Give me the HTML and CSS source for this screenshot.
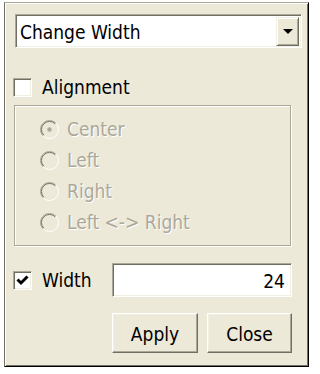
FILE: index.html
```html
<!DOCTYPE html>
<html>
<head>
<meta charset="utf-8">
<link rel="stylesheet" href="styles.css">
</head>
<body>
<div class="panel">
  <div class="combo">
    <span class="combo-text">Change Width</span>
    <span class="combo-btn">
      <svg width="10" height="5" viewBox="0 0 10 5"><path d="M0 0H10L5 5Z" fill="#000"/></svg>
    </span>
  </div>

  <div class="row check-row">
    <span class="checkbox"></span>
    <span class="label">Alignment</span>
  </div>

  <div class="group">
    <div class="radio-row">
      <svg class="radio" width="19" height="19" viewBox="0 0 19 19">
        <circle cx="9.5" cy="9.5" r="8" fill="#ece9d8"/>
        <path d="M3.1 15.9A9 9 0 0 1 15.9 3.1" fill="none" stroke="#aca899"/>
        <path d="M3.8 15.2A8 8 0 0 1 15.2 3.8" fill="none" stroke="#716f64"/>
        <path d="M15.9 3.1A9 9 0 0 1 3.1 15.9" fill="none" stroke="#fff"/>
        <circle cx="9.5" cy="9.5" r="2.2" fill="#aca899"/>
      </svg>
      <span class="label disabled">Center</span>
    </div>
    <div class="radio-row">
      <svg class="radio" width="19" height="19" viewBox="0 0 19 19">
        <circle cx="9.5" cy="9.5" r="8" fill="#ece9d8"/>
        <path d="M3.1 15.9A9 9 0 0 1 15.9 3.1" fill="none" stroke="#aca899"/>
        <path d="M3.8 15.2A8 8 0 0 1 15.2 3.8" fill="none" stroke="#716f64"/>
        <path d="M15.9 3.1A9 9 0 0 1 3.1 15.9" fill="none" stroke="#fff"/>
      </svg>
      <span class="label disabled">Left</span>
    </div>
    <div class="radio-row">
      <svg class="radio" width="19" height="19" viewBox="0 0 19 19">
        <circle cx="9.5" cy="9.5" r="8" fill="#ece9d8"/>
        <path d="M3.1 15.9A9 9 0 0 1 15.9 3.1" fill="none" stroke="#aca899"/>
        <path d="M3.8 15.2A8 8 0 0 1 15.2 3.8" fill="none" stroke="#716f64"/>
        <path d="M15.9 3.1A9 9 0 0 1 3.1 15.9" fill="none" stroke="#fff"/>
      </svg>
      <span class="label disabled">Right</span>
    </div>
    <div class="radio-row">
      <svg class="radio" width="19" height="19" viewBox="0 0 19 19">
        <circle cx="9.5" cy="9.5" r="8" fill="#ece9d8"/>
        <path d="M3.1 15.9A9 9 0 0 1 15.9 3.1" fill="none" stroke="#aca899"/>
        <path d="M3.8 15.2A8 8 0 0 1 15.2 3.8" fill="none" stroke="#716f64"/>
        <path d="M15.9 3.1A9 9 0 0 1 3.1 15.9" fill="none" stroke="#fff"/>
      </svg>
      <span class="label disabled">Left &lt;-&gt; Right</span>
    </div>
  </div>

  <div class="row width-row">
    <span class="checkbox">
      <svg width="15" height="15" viewBox="0 0 15 15"><path d="M2.5 6.5L6 10L12.5 3.5" fill="none" stroke="#000" stroke-width="3"/></svg>
    </span>
    <span class="label width-label">Width</span>
    <div class="field">24</div>
  </div>

  <div class="buttons">
    <div class="button apply">Apply</div>
    <div class="button close">Close</div>
  </div>
</div>
</body>
</html>
```

FILE: styles.css
```css
html, body {
  margin: 0;
  padding: 0;
  background: #ffffff;
}

body {
  font-family: "DejaVu Sans Condensed", "Liberation Sans", sans-serif;
  font-size: 19px;
  color: #000;
}

.panel {
  box-sizing: border-box;
  margin: 2px 0 0 4px;
  width: 305px;
  height: 365px;
  background: #ece9d8;
  border-top: 1px solid #aca899;
  border-left: 1px solid #716f64;
  border-right: 1px solid #000;
  border-bottom: 1px solid #000;
  box-shadow: inset 1px 1px 0 #fff, inset -1px -1px 0 #716f64;
  padding: 11px 0 0 8px;
}

.combo {
  box-sizing: border-box;
  margin-left: 2px;
  width: 287px;
  height: 34px;
  background: #fff;
  border-top: 1px solid #aca899;
  border-left: 1px solid #aca899;
  border-right: 1px solid #fff;
  border-bottom: 1px solid #fff;
  box-shadow: inset 1px 1px 0 #716f64, inset -1px -1px 0 #f1efe2;
  display: flex;
  align-items: center;
  padding: 0 2px 0 4px;
}

.combo-text {
  flex: 1;
  line-height: 1;
  padding-top: 2px;
}

.combo-btn {
  box-sizing: border-box;
  width: 23px;
  height: 29px;
  background: #ece9d8;
  border-top: 1px solid #f1efe2;
  border-left: 1px solid #f1efe2;
  border-right: 1px solid #716f64;
  border-bottom: 1px solid #716f64;
  box-shadow: inset 1px 1px 0 #fff, inset -1px -1px 0 #aca899;
  display: flex;
  align-items: center;
  justify-content: center;
}

.combo-btn svg {
  display: block;
  margin-left: 1px;
}

.row {
  display: flex;
  align-items: center;
}

.check-row {
  margin-top: 30px;
  height: 19px;
}

.checkbox {
  box-sizing: border-box;
  width: 19px;
  height: 19px;
  flex: none;
  background: #fff;
  border-top: 1px solid #aca899;
  border-left: 1px solid #aca899;
  border-right: 1px solid #fff;
  border-bottom: 1px solid #fff;
  box-shadow: inset 1px 1px 0 #716f64, inset -1px -1px 0 #f1efe2;
  display: flex;
  align-items: center;
  justify-content: center;
}

.checkbox svg {
  display: block;
}

.label {
  margin-left: 10px;
  line-height: 1;
  white-space: nowrap;
}

.disabled {
  color: #aca899;
  text-shadow: 1px 1px 0 #fff;
  margin-left: 8px;
}

.group {
  box-sizing: border-box;
  margin: 8px 0 0 1px;
  width: 277px;
  height: 141px;
  border: 1px solid #aca899;
  box-shadow: 1px 1px 0 #fff, inset 1px 1px 0 #fff;
  padding: 8px 0 0 25px;
}

.radio-row {
  display: flex;
  align-items: center;
  height: 31px;
}

.radio {
  display: block;
  flex: none;
}

.width-row {
  margin-top: 17px;
  height: 34px;
}

.width-label {
  width: 70px;
  margin-left: 10px;
}

.field {
  box-sizing: border-box;
  width: 180px;
  height: 34px;
  background: #fff;
  border-top: 1px solid #aca899;
  border-left: 1px solid #aca899;
  border-right: 1px solid #fff;
  border-bottom: 1px solid #fff;
  box-shadow: inset 1px 1px 0 #716f64, inset -1px -1px 0 #f1efe2;
  display: flex;
  align-items: center;
  justify-content: flex-end;
  padding: 2px 6px 0 0;
  line-height: 1;
}

.buttons {
  display: flex;
  gap: 9px;
  margin: 16px 0 0 99px;
}

.button {
  box-sizing: border-box;
  height: 40px;
  background: #ece9d8;
  border-top: 1px solid #fff;
  border-left: 1px solid #fff;
  border-right: 1px solid #716f64;
  border-bottom: 1px solid #716f64;
  box-shadow: inset -1px -1px 0 #aca899, inset 1px 1px 0 #f1efe2;
  display: flex;
  align-items: center;
  justify-content: center;
  line-height: 1;
  padding-top: 2px;
}

.apply {
  width: 86px;
}

.close {
  width: 85px;
}
```
